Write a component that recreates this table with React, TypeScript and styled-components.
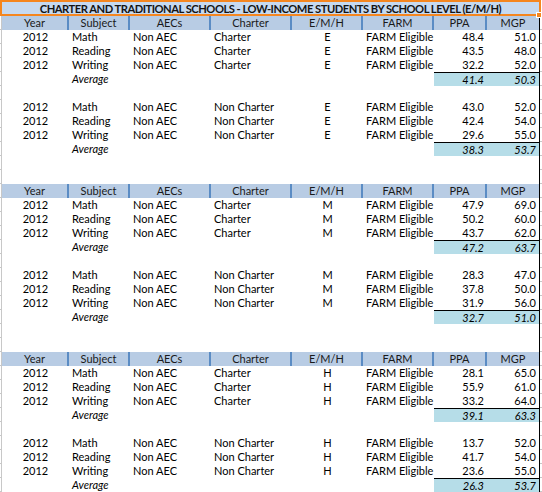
import React from "react";
import styled, { createGlobalStyle } from "styled-components";

const GlobalStyle = createGlobalStyle`
  html, body {
    margin: 0;
    padding: 0;
    background: #ffffff;
  }
  body {
    font-family: Lato, "Liberation Sans", sans-serif;
    color: #000000;
  }
`;

const COLUMNS = "67px 61px 81px 81px 71px 71px 53px 52px";
const ROW_H = 14;

type Align = "left" | "center" | "right";

type DataRow = {
  subject: string;
  charter: string;
  ppa: string;
  mgp: string;
};

type Group = {
  charter: string;
  rows: { subject: string; ppa: string; mgp: string }[];
  avg: { ppa: string; mgp: string };
};

type Level = {
  level: string;
  groups: Group[];
};

const Styles = {
  Page: styled.div`
    width: 542px;
    display: flex;
    flex-direction: column;
  `,

  TitleBar: styled.div`
    position: relative;
    box-sizing: border-box;
    width: 541px;
    height: 16px;

    border: 2px solid #f5861f;
    background-color: #c6d9f0;

    display: flex;
    align-items: center;
    justify-content: center;

    font-size: 11.2px;
    font-weight: 700;
    letter-spacing: -0.5px;
    white-space: nowrap;
    color: #141414;
  `,

  FillHandle: styled.span`
    position: absolute;
    right: -3px;
    bottom: -4px;
    width: 4px;
    height: 4px;
    background-color: #f5861f;
    border: 1px solid #ffffff;
  `,

  Sheet: styled.div`
    display: flex;
    flex-direction: row;
  `,

  Gutter: styled.div`
    width: 1px;
    border-right: 1px solid #c8c8c8;
    background-image: repeating-linear-gradient(
      to bottom,
      transparent 0,
      transparent 13px,
      #c8c8c8 13px,
      #c8c8c8 14px
    );
  `,

  Table: styled.div`
    width: 537px;
    border-right: 1px solid #000000;
    display: flex;
    flex-direction: column;
  `,

  RightTicks: styled.div`
    width: 2px;
    background-image: repeating-linear-gradient(
      to bottom,
      transparent 0,
      transparent 13px,
      #c8c8c8 13px,
      #c8c8c8 14px
    );
  `,

  HeaderRow: styled.div`
    display: grid;
    grid-template-columns: ${COLUMNS};
    height: ${ROW_H}px;
    background-color: #b8cce4;
    color: #1a1a1a;
  `,

  HeaderCell: styled.div<{ $last?: boolean }>`
    box-sizing: border-box;
    height: ${ROW_H}px;
    line-height: ${ROW_H}px;
    font-size: 11px;
    text-align: center;
    border-right: ${({ $last }) => ($last ? "none" : "2px solid #5b8cc4")};
    white-space: nowrap;
  `,

  Row: styled.div`
    display: grid;
    grid-template-columns: ${COLUMNS};
    height: ${ROW_H}px;
  `,

  Cell: styled.div<{ $align: Align; $italic?: boolean; $avg?: boolean }>`
    box-sizing: border-box;
    height: ${ROW_H}px;
    line-height: ${({ $avg }) => ($avg ? ROW_H - 1 : ROW_H)}px;
    font-size: 11px;
    white-space: nowrap;
    overflow: visible;
    text-align: ${({ $align }) => $align};
    font-style: ${({ $italic }) => ($italic ? "italic" : "normal")};
    padding: ${({ $align }) =>
      $align === "left" ? "0 0 0 3px" : $align === "right" ? "0 3px 0 0" : "0"};
    background-color: ${({ $avg }) => ($avg ? "#b6dde8" : "transparent")};
    border-top: ${({ $avg }) => ($avg ? "1px solid #000000" : "none")};
  `,

  Spacer: styled.div`
    height: ${ROW_H}px;
  `,
};

const LEVELS: Level[] = [
  {
    level: "E",
    groups: [
      {
        charter: "Charter",
        rows: [
          { subject: "Math", ppa: "48.4", mgp: "51.0" },
          { subject: "Reading", ppa: "43.5", mgp: "48.0" },
          { subject: "Writing", ppa: "32.2", mgp: "52.0" },
        ],
        avg: { ppa: "41.4", mgp: "50.3" },
      },
      {
        charter: "Non Charter",
        rows: [
          { subject: "Math", ppa: "43.0", mgp: "52.0" },
          { subject: "Reading", ppa: "42.4", mgp: "54.0" },
          { subject: "Writing", ppa: "29.6", mgp: "55.0" },
        ],
        avg: { ppa: "38.3", mgp: "53.7" },
      },
    ],
  },
  {
    level: "M",
    groups: [
      {
        charter: "Charter",
        rows: [
          { subject: "Math", ppa: "47.9", mgp: "69.0" },
          { subject: "Reading", ppa: "50.2", mgp: "60.0" },
          { subject: "Writing", ppa: "43.7", mgp: "62.0" },
        ],
        avg: { ppa: "47.2", mgp: "63.7" },
      },
      {
        charter: "Non Charter",
        rows: [
          { subject: "Math", ppa: "28.3", mgp: "47.0" },
          { subject: "Reading", ppa: "37.8", mgp: "50.0" },
          { subject: "Writing", ppa: "31.9", mgp: "56.0" },
        ],
        avg: { ppa: "32.7", mgp: "51.0" },
      },
    ],
  },
  {
    level: "H",
    groups: [
      {
        charter: "Charter",
        rows: [
          { subject: "Math", ppa: "28.1", mgp: "65.0" },
          { subject: "Reading", ppa: "55.9", mgp: "61.0" },
          { subject: "Writing", ppa: "33.2", mgp: "64.0" },
        ],
        avg: { ppa: "39.1", mgp: "63.3" },
      },
      {
        charter: "Non Charter",
        rows: [
          { subject: "Math", ppa: "13.7", mgp: "52.0" },
          { subject: "Reading", ppa: "41.7", mgp: "54.0" },
          { subject: "Writing", ppa: "23.6", mgp: "55.0" },
        ],
        avg: { ppa: "26.3", mgp: "53.7" },
      },
    ],
  },
];

const HEADERS = ["Year", "Subject", "AECs", "Charter", "E/M/H", "FARM", "PPA", "MGP"];

const HeaderRow = () => (
  <Styles.HeaderRow>
    {HEADERS.map((h, i) => (
      <Styles.HeaderCell key={h} $last={i === HEADERS.length - 1}>
        {h}
      </Styles.HeaderCell>
    ))}
  </Styles.HeaderRow>
);

const Row = ({ row, level }: { row: DataRow; level: string }) => (
  <Styles.Row>
    <Styles.Cell $align="center">2012</Styles.Cell>
    <Styles.Cell $align="left">{row.subject}</Styles.Cell>
    <Styles.Cell $align="left">Non AEC</Styles.Cell>
    <Styles.Cell $align="left">{row.charter}</Styles.Cell>
    <Styles.Cell $align="center">{level}</Styles.Cell>
    <Styles.Cell $align="left">FARM Eligible</Styles.Cell>
    <Styles.Cell $align="right">{row.ppa}</Styles.Cell>
    <Styles.Cell $align="right">{row.mgp}</Styles.Cell>
  </Styles.Row>
);

const AverageRow = ({ ppa, mgp }: { ppa: string; mgp: string }) => (
  <Styles.Row>
    <Styles.Cell $align="center" />
    <Styles.Cell $align="left" $italic>
      Average
    </Styles.Cell>
    <Styles.Cell $align="left" />
    <Styles.Cell $align="left" />
    <Styles.Cell $align="center" />
    <Styles.Cell $align="left" />
    <Styles.Cell $align="right" $italic $avg>
      {ppa}
    </Styles.Cell>
    <Styles.Cell $align="right" $italic $avg>
      {mgp}
    </Styles.Cell>
  </Styles.Row>
);

export default function App() {
  return (
    <>
      <GlobalStyle />
      <Styles.Page>
        <Styles.TitleBar>
          CHARTER AND TRADITIONAL SCHOOLS - LOW-INCOME STUDENTS BY SCHOOL LEVEL (E/M/H)
          <Styles.FillHandle />
        </Styles.TitleBar>
        <Styles.Sheet>
          <Styles.Gutter />
          <Styles.Table>
            {LEVELS.map((lvl, li) => (
              <React.Fragment key={lvl.level}>
                {li > 0 && (
                  <>
                    <Styles.Spacer />
                    <Styles.Spacer />
                  </>
                )}
                <HeaderRow />
                {lvl.groups.map((g, gi) => (
                  <React.Fragment key={g.charter}>
                    {gi > 0 && <Styles.Spacer />}
                    {g.rows.map((r) => (
                      <Row
                        key={r.subject}
                        level={lvl.level}
                        row={{ ...r, charter: g.charter }}
                      />
                    ))}
                    <AverageRow ppa={g.avg.ppa} mgp={g.avg.mgp} />
                  </React.Fragment>
                ))}
              </React.Fragment>
            ))}
          </Styles.Table>
          <Styles.RightTicks />
        </Styles.Sheet>
      </Styles.Page>
    </>
  );
}
